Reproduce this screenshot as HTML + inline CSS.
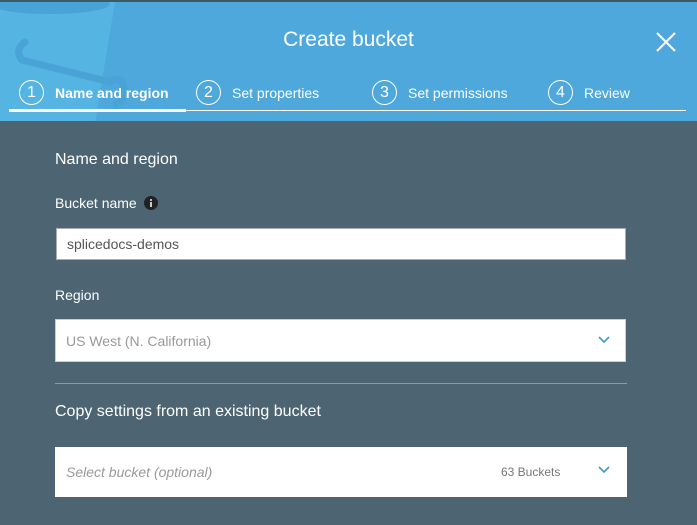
<!DOCTYPE html>
<html><head><meta charset="utf-8"><style>
*{margin:0;padding:0;box-sizing:border-box}
body{width:697px;height:525px;overflow:hidden;background:#4d6472;font-family:"Liberation Sans",sans-serif;position:relative}
.hdr{position:absolute;left:0;top:0;width:697px;height:121px;background:#4ea8dc;border-top:2px solid #3d5a6b;overflow:hidden}
.t{position:absolute;left:0;width:697px;top:26px;text-align:center;color:#fff;font-size:21px}
.x{position:absolute;left:655px;top:29px}
.line{position:absolute;left:9px;top:108px;width:677px;height:1px;background:#fff}
.act{position:absolute;left:9px;top:107px;width:177px;height:3px;background:#fff}
.tab{position:absolute;top:78px;color:#fff;font-size:14px;display:flex;align-items:center}
.c{width:25px;height:25px;border:1.5px solid #fff;border-radius:50%;display:flex;align-items:center;justify-content:center;font-size:16px;margin-right:11px}
.lbl{position:absolute;color:#fff;font-size:14px}
.box{position:absolute;background:#fff;border:1px solid #aab;}
.box span{position:absolute;left:10px;font-size:14px;color:#666}
.chev{position:absolute}
</style></head><body>
<div class="hdr">
<svg width="697" height="121" style="position:absolute;left:0;top:0">
<path d="M0 0 L115 0 L95 121 L0 121Z" fill="#55b4e2"/>
<ellipse cx="50" cy="2" rx="60" ry="10" fill="#4aa3d6"/>
<path d="M25 40 Q14 48 22 58 L110 80 Q122 72 124 86 Q126 98 116 102" fill="none" stroke="#4aa3d6" stroke-width="7" stroke-linecap="round"/>
</svg>
<div class="t">Create bucket</div>
<svg class="x" width="22" height="22"><path d="M2 2L20 20M20 2L2 20" stroke="#fff" stroke-width="2"/></svg>
<div class="tab" style="left:19px"><div class="c">1</div><b>Name and region</b></div>
<div class="tab" style="left:196px"><div class="c">2</div>Set properties</div>
<div class="tab" style="left:372px"><div class="c">3</div>Set permissions</div>
<div class="tab" style="left:548px"><div class="c">4</div>Review</div>
<div class="line"></div><div class="act"></div>
</div>
<div class="lbl" style="left:55px;top:151px;font-size:16px">Name and region</div>
<div class="lbl" style="left:55px;top:195px">Bucket name</div>
<svg style="position:absolute;left:144px;top:196px" width="14" height="14"><circle cx="7" cy="7" r="7" fill="#222"/><rect x="6" y="6" width="2" height="5" fill="#ccc"/><circle cx="7" cy="4" r="1.1" fill="#ccc"/></svg>
<div class="box" style="left:56px;top:228px;width:570px;height:32px"><span style="top:7px;color:#555">splicedocs-demos</span></div>
<div class="lbl" style="left:55px;top:287px">Region</div>
<div class="box" style="left:55px;top:319px;width:571px;height:43px;border-color:#ccc"><span style="top:13px;color:#999">US West (N. California)</span>
<svg class="chev" style="left:542px;top:16px" width="12" height="8"><path d="M1 1L6 6L11 1" fill="none" stroke="#3d9bd6" stroke-width="1.6"/></svg></div>
<div style="position:absolute;left:55px;top:383px;width:572px;height:1px;background:#8a9ca7"></div>
<div class="lbl" style="left:55px;top:403px;font-size:16px">Copy settings from an existing bucket</div>
<div class="box" style="left:55px;top:447px;width:572px;height:50px;border:none"><span style="top:17px;left:11px;color:#999;font-style:italic">Select bucket (optional)</span>
<span style="top:18px;left:446px;font-size:12px;color:#777">63 Buckets</span>
<svg class="chev" style="left:543px;top:19px" width="12" height="8"><path d="M1 1L6 6L11 1" fill="none" stroke="#3d9bd6" stroke-width="1.6"/></svg></div>
</body></html>
